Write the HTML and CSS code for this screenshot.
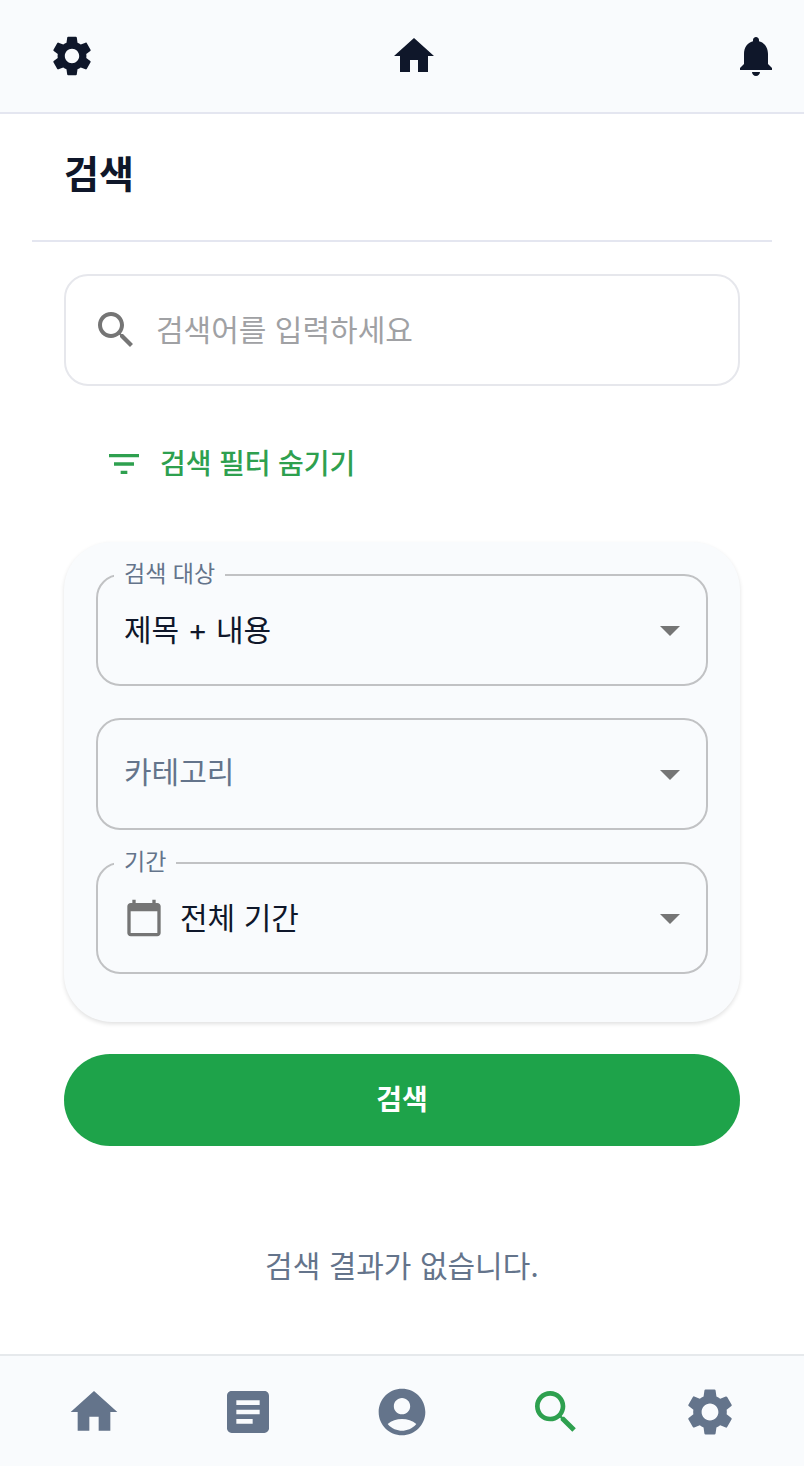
FILE: index.html
```html
<!DOCTYPE html>
<html lang="ko">
<head>
    <meta charset="UTF-8">
    <meta name="viewport" content="width=device-width, initial-scale=1.0">
    <title>검색</title>
    <link rel="stylesheet" href="styles.css">
</head>
<body>
    <!-- Top bar -->
    <header class="top-bar">
        <a href="#settings" aria-label="설정">
            <svg class="icon" viewBox="0 0 24 24"><path d="M19.14 12.94c.04-.3.06-.61.06-.94 0-.32-.02-.64-.07-.94l2.03-1.58c.18-.14.23-.41.12-.61l-1.92-3.32c-.12-.22-.37-.29-.59-.22l-2.39.96c-.5-.38-1.03-.7-1.62-.94l-.36-2.54c-.04-.24-.24-.41-.48-.41h-3.84c-.24 0-.43.17-.47.41l-.36 2.54c-.59.24-1.13.57-1.62.94l-2.39-.96c-.22-.08-.47 0-.59.22L2.74 8.87c-.12.21-.08.47.12.61l2.03 1.58c-.05.3-.09.63-.09.94s.02.64.07.94l-2.03 1.58c-.18.14-.23.41-.12.61l1.92 3.32c.12.22.37.29.59.22l2.39-.96c.5.38 1.03.7 1.62.94l.36 2.54c.05.24.24.41.48.41h3.84c.24 0 .44-.17.47-.41l.36-2.54c.59-.24 1.13-.56 1.62-.94l2.39.96c.22.08.47 0 .59-.22l1.92-3.32c.12-.22.07-.47-.12-.61l-2.01-1.58zM12 15.6c-1.98 0-3.6-1.62-3.6-3.6s1.62-3.6 3.6-3.6 3.6 1.62 3.6 3.6-1.62 3.6-3.6 3.6z"/></svg>
        </a>
        <a href="#home" aria-label="홈">
            <svg class="icon" viewBox="0 0 24 24"><path d="M10 20v-6h4v6h5v-8h3L12 3 2 12h3v8z"/></svg>
        </a>
        <a href="#notifications" aria-label="알림">
            <svg class="icon" viewBox="0 0 24 24"><path d="M12 22c1.1 0 2-.9 2-2h-4c0 1.1.89 2 2 2zm6-6v-5c0-3.07-1.64-5.64-4.5-6.32V4c0-.83-.67-1.5-1.5-1.5s-1.5.67-1.5 1.5v.68C7.63 5.36 6 7.92 6 11v5l-2 2v1h16v-1l-2-2z"/></svg>
        </a>
    </header>

    <main class="page">
        <h1>검색</h1>

        <form class="search-form">
            <div class="search-box">
                <svg class="icon" viewBox="0 0 24 24"><path d="M15.5 14h-.79l-.28-.27C15.41 12.59 16 11.11 16 9.5 16 5.91 13.09 3 9.5 3S3 5.91 3 9.5 5.91 16 9.5 16c1.61 0 3.09-.59 4.23-1.57l.27.28v.79l5 4.99L20.49 19l-4.99-5zm-6 0C7.01 14 5 11.99 5 9.5S7.01 5 9.5 5 14 7.01 14 9.5 11.99 14 9.5 14z"/></svg>
                <input type="text" id="keyword" aria-label="검색어" placeholder="검색어를 입력하세요">
            </div>

            <button type="button" class="filter-toggle">
                <svg class="icon-small" viewBox="0 0 24 24"><path d="M10 18h4v-2h-4v2zM3 6v2h18V6H3zm3 7h12v-2H6v2z"/></svg>
                검색 필터 숨기기
            </button>

            <!-- Filters -->
            <div class="filter-panel">
                <div class="field">
                    <label for="target">검색 대상</label>
                    <select id="target">
                        <option>제목 + 내용</option>
                        <option>제목</option>
                        <option>내용</option>
                    </select>
                    <svg class="icon" viewBox="0 0 24 24"><path d="M7 10l5 5 5-5z"/></svg>
                </div>
                <div class="field field-empty">
                    <label for="category">카테고리</label>
                    <select id="category">
                        <option value=""></option>
                    </select>
                    <svg class="icon" viewBox="0 0 24 24"><path d="M7 10l5 5 5-5z"/></svg>
                </div>
                <div class="field">
                    <label for="period">기간</label>
                    <svg class="icon-small" viewBox="0 0 24 24"><path d="M20 3h-1V1h-2v2H7V1H5v2H4c-1.1 0-2 .9-2 2v16c0 1.1.9 2 2 2h16c1.1 0 2-.9 2-2V5c0-1.1-.9-2-2-2zm0 18H4V8h16v13z"/></svg>
                    <select id="period">
                        <option>전체 기간</option>
                    </select>
                    <svg class="icon" viewBox="0 0 24 24"><path d="M7 10l5 5 5-5z"/></svg>
                </div>
            </div>

            <button type="submit" class="search-btn">검색</button>
        </form>

        <p class="no-result">검색 결과가 없습니다.</p>
    </main>

    <!-- Bottom navigation -->
    <nav class="bottom-nav">
        <a href="#home" aria-label="홈">
            <svg class="icon-large" viewBox="0 0 24 24"><path d="M10 20v-6h4v6h5v-8h3L12 3 2 12h3v8z"/></svg>
        </a>
        <a href="#board" aria-label="게시판">
            <svg class="icon-large" viewBox="0 0 24 24"><path d="M19 3H5c-1.1 0-2 .9-2 2v14c0 1.1.9 2 2 2h14c1.1 0 2-.9 2-2V5c0-1.1-.9-2-2-2zm-5 14H7v-2h7v2zm3-4H7v-2h10v2zm0-4H7V7h10v2z"/></svg>
        </a>
        <a href="#profile" aria-label="프로필">
            <svg class="icon-large" viewBox="0 0 24 24"><path d="M12 2C6.48 2 2 6.48 2 12s4.48 10 10 10 10-4.48 10-10S17.52 2 12 2zm0 4c1.93 0 3.5 1.57 3.5 3.5S13.93 13 12 13s-3.5-1.57-3.5-3.5S10.07 6 12 6zm0 14c-2.03 0-4.43-.82-6.14-2.88C7.55 15.8 9.68 15 12 15s4.45.8 6.14 2.12C16.43 19.18 14.03 20 12 20z"/></svg>
        </a>
        <a href="#search" class="active" aria-label="검색">
            <svg class="icon-large" viewBox="0 0 24 24"><path d="M15.5 14h-.79l-.28-.27C15.41 12.59 16 11.11 16 9.5 16 5.91 13.09 3 9.5 3S3 5.91 3 9.5 5.91 16 9.5 16c1.61 0 3.09-.59 4.23-1.57l.27.28v.79l5 4.99L20.49 19l-4.99-5zm-6 0C7.01 14 5 11.99 5 9.5S7.01 5 9.5 5 14 7.01 14 9.5 11.99 14 9.5 14z"/></svg>
        </a>
        <a href="#settings" aria-label="설정">
            <svg class="icon-large" viewBox="0 0 24 24"><path d="M19.14 12.94c.04-.3.06-.61.06-.94 0-.32-.02-.64-.07-.94l2.03-1.58c.18-.14.23-.41.12-.61l-1.92-3.32c-.12-.22-.37-.29-.59-.22l-2.39.96c-.5-.38-1.03-.7-1.62-.94l-.36-2.54c-.04-.24-.24-.41-.48-.41h-3.84c-.24 0-.43.17-.47.41l-.36 2.54c-.59.24-1.13.57-1.62.94l-2.39-.96c-.22-.08-.47 0-.59.22L2.74 8.87c-.12.21-.08.47.12.61l2.03 1.58c-.05.3-.09.63-.09.94s.02.64.07.94l-2.03 1.58c-.18.14-.23.41-.12.61l1.92 3.32c.12.22.37.29.59.22l2.39-.96c.5.38 1.03.7 1.62.94l.36 2.54c.05.24.24.41.48.41h3.84c.24 0 .44-.17.47-.41l.36-2.54c.59-.24 1.13-.56 1.62-.94l2.39.96c.22.08.47 0 .59-.22l1.92-3.32c.12-.22.07-.47-.12-.61l-2.01-1.58zM12 15.6c-1.98 0-3.6-1.62-3.6-3.6s1.62-3.6 3.6-3.6 3.6 1.62 3.6 3.6-1.62 3.6-3.6 3.6z"/></svg>
        </a>
    </nav>
</body>
</html>
```
FILE: styles.css
```css
* {
    box-sizing: border-box;
}

body {
    margin: 0;
    min-height: 100vh;
    display: flex;
    flex-direction: column;
    background-color: #fff;
    color: #0f172a;
    font-family: Inter, "Noto Sans CJK KR", sans-serif;
    font-size: 30px;
    line-height: 48px;
}

input,
select,
button {
    font: inherit;
    color: inherit;
    border: none;
    background: none;
    padding: 0;
}

svg {
    display: block;
    flex-shrink: 0;
    fill: currentColor;
}

.icon {
    width: 48px;
    height: 48px;
}

.icon-small {
    width: 40px;
    height: 40px;
}

.icon-large {
    width: 56px;
    height: 56px;
}

/* Top bar */
.top-bar {
    display: flex;
    justify-content: space-between;
    padding: 32px 24px 32px 48px;
    background-color: #f9fbfd;
    border-bottom: 2px solid #e4e6f0;
}

.top-bar a {
    color: #0f172a;
}

.page {
    flex: 1;
    padding: 0 32px;
}

h1 {
    margin: 0;
    padding: 30px 32px 36px;
    font-size: 38px;
    line-height: 60px;
    font-weight: 700;
    border-bottom: 2px solid #e4e6f0;
}

/* Search form */
.search-form {
    padding: 32px 32px 0;
}

.search-box {
    display: flex;
    align-items: center;
    gap: 16px;
    height: 112px;
    padding: 0 26px;
    border: 2px solid #e6e7ec;
    border-radius: 24px;
    color: #757575;
}

.search-box input {
    flex: 1;
    min-width: 0;
    height: 100%;
    color: #0f172a;
    outline: none;
}

.search-box input::placeholder {
    color: #a0a1a4;
    opacity: 1;
}

.filter-toggle {
    display: flex;
    align-items: center;
    gap: 16px;
    height: 92px;
    margin: 32px 0;
    padding: 0 40px;
    color: #2ea04f;
    font-size: 28px;
    font-weight: 500;
    cursor: pointer;
}

.filter-panel {
    display: flex;
    flex-direction: column;
    gap: 32px;
    padding: 32px 32px 48px;
    background-color: #f9fbfd;
    border-radius: 48px;
    box-shadow: 0 2px 4px rgba(0, 0, 0, 0.12);
}

.field {
    position: relative;
    display: flex;
    align-items: center;
    gap: 16px;
    height: 112px;
    padding: 0 12px 0 26px;
    border: 2px solid #c1c2c4;
    border-radius: 24px;
    color: #757575;
}

.field select {
    flex: 1;
    min-width: 0;
    height: 100%;
    color: #0f172a;
    appearance: none;
    outline: none;
}

/* label sits on the top border and cuts it */
.field label {
    position: absolute;
    top: -18px;
    left: 16px;
    padding: 0 10px;
    background-color: #f9fbfd;
    color: #64748b;
    font-size: 23px;
    line-height: 32px;
}

.field-empty label {
    top: 28px;
    font-size: 30px;
    line-height: 48px;
    pointer-events: none;
}

.search-btn {
    display: block;
    width: 100%;
    height: 92px;
    margin-top: 32px;
    border-radius: 46px;
    background-color: #1ea34a;
    color: #fff;
    font-size: 28px;
    font-weight: 700;
    cursor: pointer;
}

.no-result {
    margin: 0;
    padding: 96px 0 64px;
    color: #64748b;
    text-align: center;
}

/* Bottom navigation */
.bottom-nav {
    display: flex;
    padding: 28px 17px 26px;
    background-color: #f9fbfd;
    border-top: 2px solid #e6e9ec;
}

.bottom-nav a {
    flex: 1;
    display: flex;
    justify-content: center;
    color: #64748b;
}

.bottom-nav a.active {
    color: #2ea04f;
}
```
